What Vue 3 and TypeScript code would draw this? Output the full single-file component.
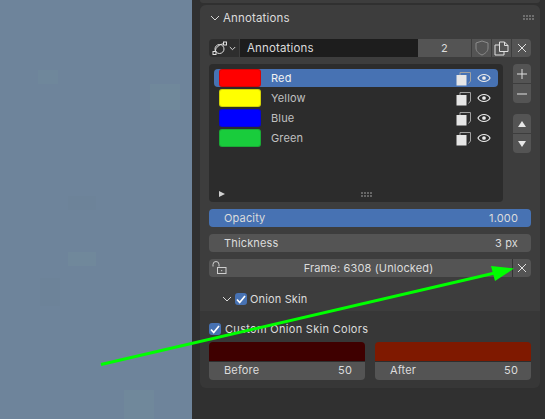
<script setup lang="ts">
interface Layer { name: string; color: string; active?: boolean }
const layers: Layer[] = [
  { name: 'Red', color: '#ff0000', active: true },
  { name: 'Yellow', color: '#ffff00' },
  { name: 'Blue', color: '#0000ff' },
  { name: 'Green', color: '#19cc3c' },
]
const patches = [
  [38, 70, 20, 14, '#6f879b'],
  [150, 84, 30, 26, '#70889b'],
  [68, 252, 28, 14, '#70889b'],
  [124, 390, 30, 29, '#70889b'],
  [68, 196, 28, 14, '#6d8399'],
  [40, 278, 20, 28, '#6d8399'],
] as const
</script>

<template>
  <div class="app">
    <div class="viewport">
      <svg class="noise" width="192" height="419" viewBox="0 0 192 419">
        <rect v-for="(p, i) in patches" :key="i" :x="p[0]" :y="p[1]" :width="p[2]" :height="p[3]" :fill="p[4]" />
      </svg>
    </div>
    <div class="sidebar">
      <div class="prev-panel"></div>
      <section class="panel">
        <div class="main">
          <header class="head">
            <svg class="chev" width="10" height="6" viewBox="0 0 10 6"><path d="M1 1l4 4 4-4" /></svg>
            <span class="title">Annotations</span>
            <span class="grip big"></span>
          </header>

          <div class="idrow">
            <div class="btn iconbtn">
              <svg width="16" height="15" viewBox="0 0 16 15" class="ico">
                <circle cx="7.5" cy="8" r="4.5" />
                <rect x="1" y="10.5" width="3" height="3" />
                <rect x="11.5" y="1" width="3" height="3" />
                <path d="M3 10.5C4 6 7 3.5 11.5 2.7" />
              </svg>
              <svg class="chev small" width="7" height="5" viewBox="0 0 7 5"><path d="M.8 1l2.7 2.7L6.2 1" /></svg>
            </div>
            <div class="field">Annotations</div>
            <div class="btn count">2</div>
            <div class="btn sq">
              <svg width="14" height="16" viewBox="0 0 14 16" class="ico dim"><path d="M7 1l6 2v5c0 3.500-3 5.700-6 7-3-1.300-6-3.500-6-7V3z" /></svg>
            </div>
            <div class="btn sq">
              <svg width="15" height="15" viewBox="0 0 15 15" class="ico"><path d="M5.500 10.500V1h5l3.500 3.500v6zM10.500 1v3.500H14M5.500 4H1v10h9v-3.500" /></svg>
            </div>
            <div class="btn sq">
              <svg width="10" height="10" viewBox="0 0 10 10" class="ico"><path d="M1 1l8 8M9 1l-8 8" /></svg>
            </div>
          </div>

          <div class="listrow">
            <div class="list">
              <div v-for="l in layers" :key="l.name" class="item" :class="{ active: l.active }">
                <span class="swatch" :style="{ background: l.color }"></span>
                <span class="lname">{{ l.name }}</span>
                <svg class="mask" width="15" height="15" viewBox="0 0 15 15">
                  <path class="mline" d="M4 4V1.500h10.500V10l-2 2.500" />
                  <rect x="0.500" y="4" width="10" height="10.500" fill="#e6e6e6" />
                </svg>
                <svg class="eye" width="14" height="10" viewBox="0 0 15 10">
                  <path d="M1 5c3-5 10-5 13 0-3 5-10 5-13 0z" />
                  <circle cx="7.500" cy="5" r="2" />
                </svg>
              </div>
              <div class="listfoot">
                <span class="tri"></span>
                <span class="grip foot"></span>
              </div>
            </div>
            <div class="side">
              <div class="stack">
                <div class="btn sbtn">
                  <svg width="10" height="10" viewBox="0 0 10 10" class="ico"><path d="M5 0v10M0 5h10" /></svg>
                </div>
                <div class="btn sbtn">
                  <svg width="10" height="2" viewBox="0 0 10 2" class="ico"><path d="M0 1h10" /></svg>
                </div>
              </div>
              <div class="stack">
                <div class="btn sbtn"><span class="up"></span></div>
                <div class="btn sbtn"><span class="down"></span></div>
              </div>
            </div>
          </div>

          <div class="slider blue"><span>Opacity</span><span>1.000</span></div>
          <div class="slider"><span>Thickness</span><span>3 px</span></div>

          <div class="frame">
            <svg class="lock" width="15" height="13" viewBox="0 0 15 13">
              <path d="M1 5.500V3.500a3 3 0 0 1 6 0v2" />
              <rect x="5.500" y="6.500" width="8.500" height="6" />
              <path d="M9.700 9v1.200" />
            </svg>
            <span class="ftext">Frame: 6308 (Unlocked)</span>
            <span class="fx">
              <svg width="10" height="10" viewBox="0 0 10 10" class="ico"><path d="M1 1l8 8M9 1l-8 8" /></svg>
            </span>
          </div>

          <div class="onion">
            <svg class="chev" width="10" height="6" viewBox="0 0 10 6"><path d="M1 1l4 4 4-4" /></svg>
            <span class="check">
              <svg width="10" height="9" viewBox="0 0 10 9"><path d="M1 4.500l2.700 3L9 1" /></svg>
            </span>
            <span>Onion Skin</span>
          </div>
        </div>

        <div class="sub">
          <div class="custom">
            <span class="check">
              <svg width="10" height="9" viewBox="0 0 10 9"><path d="M1 4.500l2.700 3L9 1" /></svg>
            </span>
            <span>Custom Onion Skin Colors</span>
          </div>
          <div class="colors">
            <div class="cbox">
              <div class="cswatch" style="background: #3f0000"></div>
              <div class="cval"><span>Before</span><span>50</span></div>
            </div>
            <div class="cbox">
              <div class="cswatch" style="background: #7f1900"></div>
              <div class="cval"><span>After</span><span>50</span></div>
            </div>
          </div>
        </div>
      </section>
    </div>

    <svg class="arrow" width="545" height="419" viewBox="0 0 545 419">
      <path d="M101 364.500L497 272.500" stroke="#00ff00" stroke-width="3" fill="none" />
      <path d="M514 268.500L491 266L495 281z" fill="#00ff00" />
    </svg>
  </div>
</template>

<style>
html, body { margin: 0; background: #303030; }
</style>

<style scoped>
.app {
  position: relative;
  display: flex;
  width: 545px;
  height: 419px;
  overflow: hidden;
  font-family: Inter, "Liberation Sans", sans-serif;
  font-size: 11px;
  letter-spacing: 0.150px;
  color: #dcdcdc;
  background: #303030;
}
.viewport { width: 192px; flex: none; background: #6e849b; }
.noise { display: block; }
.sidebar { flex: 1; padding: 0 5px 0 8px; }
.prev-panel { height: 3px; background: #3d3d3d; border-radius: 0 0 5px 5px; margin-bottom: 2px; }
.panel { border-radius: 6px; overflow: hidden; background: #373737; height: 383px; }
.main { background: #3d3d3d; height: 306px; padding: 0 9px; }
.head { display: flex; align-items: center; height: 26px; padding-bottom: 1px; box-sizing: border-box; }
.chev { fill: none; stroke: #d8d8d8; stroke-width: 1; flex: none; }
.head .chev { margin-left: 1px; margin-right: 3px; }
.title { font-size: 11.500px; flex: 1; }
.grip {
  width: 12px; height: 5px; flex: none;
  background-image: radial-gradient(circle at 1px 1px, #a8a8a8 0.600px, transparent 0.800px);
  background-size: 3px 3px;
}
.grip.big { margin-right: -4px; }
.grip.foot { margin-left: 21px; }
.idrow { display: flex; height: 18px; margin-top: 8px; }
.btn { background: #545454; display: flex; align-items: center; justify-content: center; box-sizing: border-box; }
.ico { fill: none; stroke: #e0e0e0; stroke-width: 1; }
.ico.dim { stroke: #8a8a8a; }
.iconbtn { width: 30px; gap: 1px; border-radius: 4px 0 0 4px; background: #2e2e2e; margin-right: 1px; flex: none; }
.small { stroke: #d8d8d8; }
.field { width: 178px; flex: none; background: #1d1d1d; padding-left: 7px; box-sizing: border-box; line-height: 18px; font-size: 11.500px; }
.count { width: 53px; flex: none; margin-right: 1px; }
.sq { width: 19px; flex: none; margin-right: 1px; }
.sq:last-child { margin-right: 0; border-radius: 0 4px 4px 0; }
.listrow { display: flex; margin-top: 7px; }
.list { width: 294px; height: 138px; background: #2c2c2c; border-radius: 4px; padding: 5px; box-sizing: border-box; position: relative; flex: none; }
.item { display: flex; align-items: center; height: 18px; margin-bottom: 2px; border-radius: 4px; color: #c0c0c0; }
.item.active { background: #4772b3; color: #f2f2f2; }
.swatch { width: 42px; height: 18px; border-radius: 3px; margin-left: 5px; flex: none; box-sizing: border-box; border: 1px solid #1e1e1e33; }
.lname { margin-left: 10px; flex: 1; }
.mask { flex: none; margin-right: 6px; }
.mline { fill: none; stroke: #a0a0a0; stroke-width: 1; }
.eye { margin-right: 7px; fill: none; stroke: #ececec; stroke-width: 1.200px; flex: none; }
.eye circle { fill: #ececec; stroke: none; }
.listfoot { position: absolute; left: 10px; right: 10px; bottom: 4px; height: 8px; display: flex; align-items: center; justify-content: center; }
.tri { position: absolute; left: 0; top: 1px; width: 0; height: 0; border-left: 6px solid #d0d0d0; border-top: 3px solid transparent; border-bottom: 3px solid transparent; }
.side { margin-left: 10px; width: 18px; display: flex; flex-direction: column; gap: 11px; }
.stack { display: flex; flex-direction: column; gap: 1px; }
.sbtn { height: 19px; width: 18px; }
.stack .sbtn:first-child { border-radius: 4px 4px 0 0; }
.stack .sbtn:last-child { border-radius: 0 0 4px 4px; }
.up, .down { width: 0; height: 0; border-left: 4px solid transparent; border-right: 4px solid transparent; }
.up { border-bottom: 6px solid #e6e6e6; }
.down { border-top: 6px solid #e6e6e6; }
.slider {
  display: flex; justify-content: space-between; align-items: center;
  height: 18px; margin-top: 7px; padding: 0 13px 0 15px;
  background: #545454; border-radius: 4px;
}
.listrow + .slider { background: #4772b3; }
.frame { display: flex; align-items: center; height: 18px; margin-top: 7px; background: #545454; border-radius: 4px; position: relative; }
.lock { position: absolute; left: 3px; top: 2px; fill: none; stroke: #cfcfcf; stroke-width: 1; }
.ftext { flex: 1; text-align: center; padding-left: 16px; }
.fx { width: 19px; height: 18px; display: flex; align-items: center; justify-content: center; border-left: 1px solid #333; box-sizing: border-box; }
.onion { display: flex; align-items: center; gap: 3px; margin: 13px 0 0 13px; height: 18px; }
.check { width: 12px; height: 12px; background: #4772b3; border-radius: 3px; display: flex; align-items: center; justify-content: center; flex: none; }
.check svg { fill: none; stroke: #fff; stroke-width: 1.700px; }
.sub { padding: 9px 9px 0; }
.custom { display: flex; align-items: center; gap: 4px; height: 18px; letter-spacing: 0.300px; }
.colors { display: flex; gap: 10px; margin-top: 4px; }
.cbox { flex: 1; border-radius: 4px; overflow: hidden; }
.cswatch { height: 19px; }
.cval { display: flex; justify-content: space-between; align-items: center; height: 19px; padding: 0 13px 2px 15px; background: #545454; border-top: 1px solid #2e2e2e; box-sizing: border-box; }
.arrow { position: absolute; left: 0; top: 0; pointer-events: none; }
</style>
